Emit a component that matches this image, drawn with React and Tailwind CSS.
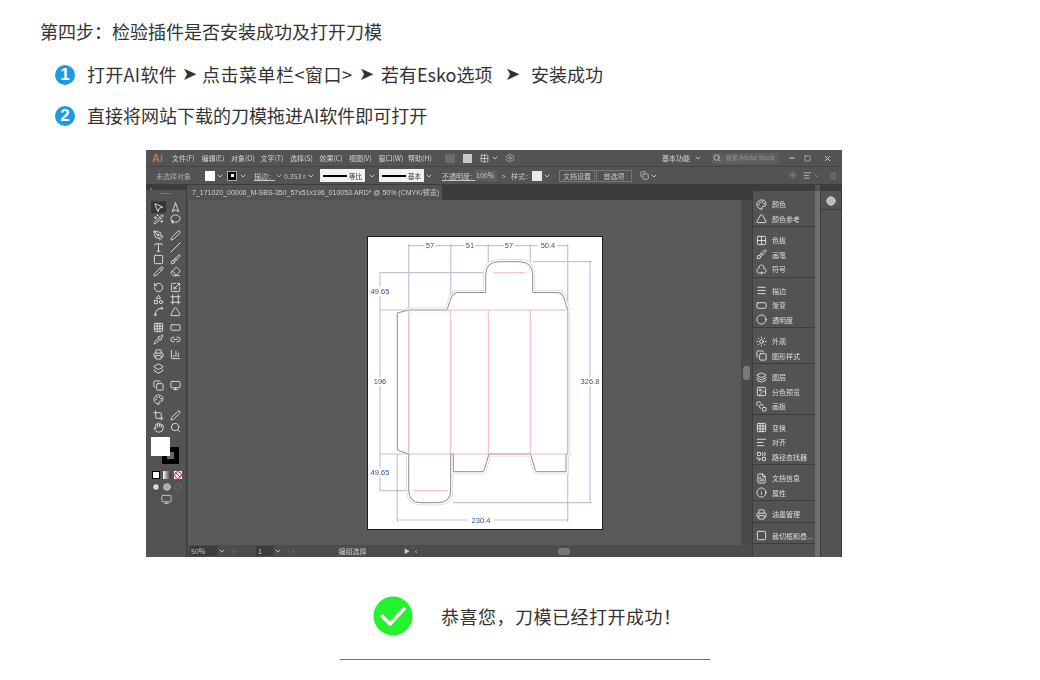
import {
  MousePointer2, Navigation2, WandSparkles, Lasso, PenTool, Pen, Type, Slash, Square, Brush, Pencil, Eraser,
  RotateCcw, Scaling, Shapes, Frame, Spline, Triangle, Grid3x3, RectangleHorizontal, Pipette, Link2,
  Printer, ChartColumn, Layers2, Monitor, Crop, Hand, Search, Palette, Club, Menu, Circle, Sun, Copy,
  Layers, SquareStack, Grid2x2, AlignLeft, Combine, FileText, Info, Image, Ban, ChevronDown, Minus, X,
  Settings,
} from "lucide-react";

const menus = ["文件(F)", "编辑(E)", "对象(O)", "文字(T)", "选择(S)", "效果(C)", "视图(V)", "窗口(W)", "帮助(H)"];

const tools = [
  [MousePointer2, Navigation2, ""],
  [WandSparkles, Lasso, ""],
  [PenTool, Pen, "mt-[4px]"],
  [Type, Slash, ""],
  [Square, Brush, ""],
  [Pencil, Eraser, ""],
  [RotateCcw, Scaling, "mt-[4px]"],
  [Shapes, Frame, ""],
  [Spline, Triangle, ""],
  [Grid3x3, RectangleHorizontal, "mt-[4px]"],
  [Pipette, Link2, ""],
  [Printer, ChartColumn, "mt-[3px]"],
  [Layers2, null, "mt-[2px]"],
  [Copy, Monitor, "mt-[5px]"],
  [Palette, null, "mt-[2px]"],
  [Crop, Pen, "mt-[4px]"],
  [Hand, Search, ""],
];

const panelGroups = [
  [[Palette, "颜色"], [Triangle, "颜色参考"]],
  [[Grid2x2, "色板"], [Brush, "画笔"], [Club, "符号"]],
  [[Menu, "描边"], [RectangleHorizontal, "渐变"], [Circle, "透明度"]],
  [[Sun, "外观"], [Copy, "图形样式"]],
  [[Layers, "图层"], [Image, "分色预览"], [SquareStack, "画板"]],
  [[Grid3x3, "变换"], [AlignLeft, "对齐"], [Combine, "路径查找器"]],
  [[FileText, "文档信息"], [Info, "属性"]],
  [[Printer, "油墨管理"]],
  [[Square, "裁切框和叠..."]],
];

const Chevron = ({ className = "" }) => <ChevronDown size={8} strokeWidth={2.5} className={`text-[#d8d8d8] shrink-0 ${className}`} />;

const LineBox = ({ label, className }) => (
  <div className={`flex items-center h-[13px] w-[45px] bg-[#f2f2f2] px-[3px] gap-[2px] text-[#333] text-[6.5px] ${className}`}>
    <div className="h-[2px] w-[26px] bg-black"></div>
    <span>{label}</span>
  </div>
);

const ToolSlot = ({ Icon, active }) => (
  <div className={`relative w-[15px] h-[12px] flex items-center justify-center ${active ? "bg-[#383838]" : ""}`}>
    {Icon && <Icon size={11} strokeWidth={2} className="text-[#e2e2e2]" />}
  </div>
);

const MenuBar = () => (
  <div className="h-[17px] flex items-center border-b border-[#444] text-[7px] text-[#d4d4d4]">
    <span className="ml-[6px] w-[20px] text-[11px] font-bold text-[#b9774b] font-['Liberation_Sans',sans-serif]">Ai</span>
    <div className="flex gap-[8.5px]">
      {menus.map((m) => (
        <span key={m} className="w-[21px] whitespace-nowrap">{m}</span>
      ))}
    </div>
    <div className="ml-[16px] w-[10px] h-[9px] bg-[#6b6b6b]"></div>
    <div className="ml-[8px] w-[9px] h-[9px] bg-[#c8c8c8]"></div>
    <Grid2x2 size={9} className="ml-[8px] text-[#ddd]" />
    <Chevron className="ml-[2px]" />
    <Settings size={10} className="ml-[6px] text-[#aaa]" />
    <span className="ml-[147px] whitespace-nowrap">基本功能</span>
    <Chevron className="ml-[4px]" />
    <div className="ml-[10px] h-[11px] w-[67px] bg-[#5e5e5e] flex items-center gap-[2px] px-[1px] text-[6px] text-[#999]">
      <Search size={8} className="text-[#ddd]" />
      <span className="whitespace-nowrap ml-[3px]">搜索 Adobe Stock</span>
    </div>
    <Minus size={8} strokeWidth={3} className="ml-[9px]" />
    <Square size={7} strokeWidth={2} className="ml-[8px]" />
    <X size={9} strokeWidth={2.5} className="ml-[12px]" />
  </div>
);

const ControlBar = () => (
  <div className="h-[18px] flex items-center border-b border-[#3c3c3c] text-[7px] text-[#c8c8c8] whitespace-nowrap">
    <span className="ml-[10px] w-[31px] text-[#aaa]">未选择对象</span>
    <div className="ml-[18px] w-[10px] h-[10px] bg-white"></div>
    <Chevron className="ml-[1px]" />
    <div className="ml-[3px] w-[10px] h-[10px] bg-black border border-[#aaa] flex items-center justify-center">
      <div className="w-[3px] h-[3px] bg-white"></div>
    </div>
    <Chevron className="ml-[2px]" />
    <span className="ml-[7px] w-[17px] underline">{"描边\uFF1A"}</span>
    <ChevronDown size={8} className="ml-[4px]" />
    <span className="ml-[1px] w-[20px]">0.353 r</span>
    <Chevron className="ml-[3px]" />
    <LineBox label="等比" className="ml-[5px]" />
    <Chevron className="ml-[3px]" />
    <LineBox label="基本" className="ml-[3px]" />
    <Chevron className="ml-[1px]" />
    <span className="ml-[9px] w-[30px] underline">{"不透明度\uFF1A"}</span>
    <span className="ml-[3px] w-[22px] h-[11px] bg-[#5e5e5e] leading-[11px] px-[1px]">100%</span>
    <span className="ml-[5px] w-[6px]">&gt;</span>
    <span className="ml-[3px] w-[20px]">{"样式\uFF1A"}</span>
    <div className="ml-[1px] w-[10px] h-[10px] bg-[#e8e8e8]"></div>
    <Chevron className="ml-[1px]" />
    <span className="ml-[8px] w-[36px] h-[12px] border border-[#777] text-center leading-[10px]">文档设置</span>
    <span className="ml-[1px] w-[36px] h-[12px] border border-[#777] text-center leading-[10px]">首选项</span>
    <Copy size={9} className="ml-[8px]" />
    <Chevron className="ml-[1px]" />
    <Grid2x2 size={7} className="ml-[131px] text-[#888]" />
    <AlignLeft size={9} className="ml-[7px]" />
    <Chevron className="ml-[1px] opacity-40" />
    <Menu size={8} className="ml-[8px] text-[#999]" />
  </div>
);

const ToolPanel = () => (
  <div className="w-[41px] shrink-0 border-r border-[#3c3c3c] flex flex-col relative">
    <div className="h-[5px] bg-[#3c3c3c] text-[#bbb] text-[5px] leading-[5px] pl-[4px]">«</div>
    <div className="h-[1px] w-[10px] mt-[3px] mx-auto bg-[#777]"></div>
    <div className="mt-[7px] pl-[5px] flex flex-col">
      {tools.map(([L, R, cls], i) => (
        <div key={i} className={`flex gap-[2px] ${cls}`}>
          <ToolSlot Icon={L} active={i === 0} />
          <ToolSlot Icon={R} />
        </div>
      ))}
    </div>
    {/* fill and stroke overlap each other */}
    <div className="relative ml-[5px] mt-[4px] w-[28px] h-[28px]">
      <div className="absolute left-[11px] top-[10px] w-[17px] h-[17px] bg-black flex items-center justify-center">
        <div className="w-[7px] h-[7px] bg-[#666]"></div>
      </div>
      <div className="absolute left-0 top-0 w-[19px] h-[19px] bg-white"></div>
    </div>
    <div className="ml-[6px] mt-[6px] flex gap-[3px]">
      <div className="w-[8px] h-[8px] bg-white border border-black"></div>
      <div className="w-[8px] h-[8px] bg-gradient-to-r from-white to-[#333]"></div>
      <div className="w-[8px] h-[8px] bg-white flex items-center justify-center">
        <Ban size={8} strokeWidth={3} className="text-[#e0201c]" />
      </div>
    </div>
    <div className="ml-[6px] mt-[4px] flex gap-[3px]">
      <Circle size={8} fill="#ddd" className="text-[#222]" />
      <Circle size={8} fill="#aaa" className="text-[#ddd]" />
      <Circle size={8} className="text-[#777]" />
    </div>
    <Monitor size={11} className="ml-[15px] mt-[3px] text-[#ccc]" />
  </div>
);

const Dieline = () => {
  const body =
    "M408.7 310 H447 L451 298 Q453 292.5 457 292.5 H485.7 V275 Q485.7 261.7 499 261.7 H519 Q532.7 261.7 532.7 275 V292.5 H558 Q562 292.5 564 298 L567.7 310 V454 L566 454 V471.7 H537 Q535.7 471.7 535 469 L530.5 454 H489 L484.5 469 Q484 471.7 482 471.7 H453.3 V454 H450.7 V490 Q450.7 502.7 438 502.7 H421 Q408.7 502.7 408.7 490 Z";
  const dim = "#bcc5da";
  const label = "#2f5597";
  const labels = [
    [430, 248, "57"], [470, 248, "51"], [509, 248, "57"], [548, 248, "50.4"],
    [380, 294, "49.65"], [380, 384, "196"], [380, 475, "49.65"], [590, 384, "326.8"], [481, 522.5, "230.4"],
  ];
  return (
    <svg viewBox="368 237 234 292" className="w-[234px] h-[292px] block">
      <rect x="368" y="237" width="234" height="292" fill="#fff" />
      <g stroke={dim} strokeWidth="1.2" fill="none">
        <path d="M408.7 245.7 H567.7 M408.7 243.7 V310 M450.7 243.7 V310 M488.3 243.7 V262 M530.3 243.7 V262 M567.7 243.7 V310" />
        <path d="M380 272.7 H488 M380 310 H408 M380 454 H408 M380 490.7 H408 M380 272.7 V490.7" />
        <path d="M533 261.7 H592 M590 261.7 V502.7 M453 502.7 H592" />
        <path d="M397.3 520 H567.7 M397.3 454 V522 M567.7 454 V522" />
      </g>
      <path d={body} fill="#fff" stroke="#d3dfc4" strokeWidth="5" />
      <path d={body} fill="#fff" stroke="#fff" strokeWidth="3.5" />
      <path d={body} fill="#fff" stroke="#8f8f8f" strokeWidth="1" />
      <path d="M408.7 310 L397.3 313 V450 L408.7 454" fill="#fff" stroke="#8f8f8f" strokeWidth="1" />
      <g stroke="#f4b6c2" strokeWidth="1" fill="none">
        <path d="M408.7 310 H567.7 M408.7 454 H567.7 M408.7 310 V454 M450.7 310 V454 M488.3 310 V454 M530.3 310 V454 M567.7 310 V454" />
        <path d="M493 272.7 H525 M413 490.7 H446.7" />
      </g>
      <g fill={label} fontSize="7.5" textAnchor="middle" fontFamily="Liberation Sans, sans-serif">
        {labels.map(([x, y, t]) => (
          <g key={`${x}-${y}`}>
            <rect x={x - t.length * 2.6} y={y - 7} width={t.length * 5.2} height="9" fill="#fff" />
            <text x={x} y={y}>{t}</text>
          </g>
        ))}
      </g>
    </svg>
  );
};

const Center = () => (
  <div className="flex-1 flex flex-col min-w-0">
    <div className="h-[15px] bg-[#3c3c3c] flex text-[7px] text-[#d0d0d0]">
      <div className="w-[255px] bg-[#535353] flex items-center pl-[5px] whitespace-nowrap font-['Liberation_Sans','Noto_Sans_CJK_SC',sans-serif]">
        7_171020_00006_M-SBS-350_57x51x196_010053.ARD* @ 50% (CMYK/预览)
        <X size={7} strokeWidth={3} className="ml-[5px]" />
      </div>
    </div>
    <div className="flex-1 flex min-h-0">
      <div className="flex-1 bg-[#5a5a5a] pl-[180px] pt-[37px] border-l border-[#4a4a4a]">
        <div className="w-[234px] h-[292px] shadow-[0_0_0_1px_#1d1d1d]">
          <Dieline />
        </div>
      </div>
      <div className="w-[11px] bg-[#4a4a4a] flex flex-col items-center pt-[166px]">
        <div className="w-[7px] h-[14px] rounded-[3px] bg-[#7a7a7a]"></div>
      </div>
    </div>
    <div className="h-[12px] bg-[#4c4c4c] flex items-center text-[7px] text-[#ccc] whitespace-nowrap">
      <span className="ml-[3px] w-[27px] h-[10px] bg-[#3c3c3c] leading-[10px] px-[1px]">50%</span>
      <Chevron className="ml-[1px]" />
      <span className="ml-[6px] w-[24px] text-[#777] text-[6px]">|‹ ‹</span>
      <span className="w-[17px] h-[10px] bg-[#3c3c3c] leading-[10px] px-[2px]">1</span>
      <Chevron className="ml-[1px]" />
      <span className="ml-[6px] w-[22px] text-[#777] text-[6px]">› ›|</span>
      <span className="w-[75px] ml-[5px] text-center">编组选择</span>
      <span className="ml-[14px] text-[6px]">▶</span>
      <span className="ml-[5px] text-[8px]">‹</span>
      <div className="ml-[141px] w-[12px] h-[7px] rounded-[3px] bg-[#777]"></div>
    </div>
  </div>
);

const RightDock = () => (
  <div className="w-[90px] shrink-0 flex">
    <div className="w-[63px] flex flex-col overflow-hidden border-l border-[#3c3c3c]">
      <div className="h-[6px] shrink-0 bg-[#3c3c3c]"></div>
      {panelGroups.map((group, i) => (
        <div key={i} className="shrink-0 border-b border-[#3c3c3c] pt-[6px]">
          {group.map(([Icon, name]) => (
            <div key={name} className="h-[14.5px] flex items-center text-[7px] text-[#dedede] whitespace-nowrap">
              <Icon size={11} strokeWidth={2} className="ml-[3px] text-[#e4e4e4]" />
              <span className="ml-[5px]">{name}</span>
            </div>
          ))}
        </div>
      ))}
    </div>
    <div className="w-[5px] bg-[#6e6e6e] mt-[6px]"></div>
    <div className="w-[1px] bg-[#3c3c3c]"></div>
    <div className="w-[20px] flex flex-col">
      <div className="h-[6px] bg-[#3c3c3c]"></div>
      <div className="h-[18px] border-b border-[#3c3c3c] flex items-center justify-center mt-[1px]">
        <Circle size={10} fill="#bbb" className="text-[#ddd]" />
      </div>
    </div>
    <div className="w-[1px] bg-[#3c3c3c]"></div>
  </div>
);

const AiWindow = () => (
  <div className="ml-[146px] mt-[23px] w-[696px] h-[407px] bg-[#535353] flex flex-col overflow-hidden blur-[0.35px] font-['Noto_Sans_CJK_SC',sans-serif]">
    <MenuBar />
    <ControlBar />
    <div className="flex-1 flex min-h-0">
      <ToolPanel />
      <Center />
      <RightDock />
    </div>
  </div>
);

const StepBadge = ({ n }) => (
  <div className="ml-[15px] mt-[2px] w-[20px] h-[20px] rounded-full bg-[#1b9be3] text-white text-[17px] font-bold leading-[20px] text-center font-['Liberation_Sans',sans-serif]">
    {n}
  </div>
);

const Arrow = ({ className }) => (
  <span className={`w-[15px] text-[18px] leading-[24px] font-['DejaVu_Sans',sans-serif] ${className}`}>➤</span>
);

export default function App() {
  return (
    <div className="w-[1040px] h-[680px] bg-white overflow-hidden pt-[19px] text-[18px] leading-[24px] text-[#333] font-['Noto_Sans_CJK_SC',sans-serif]">
      <div className="ml-[40px] h-[24px]">{"第四步\uFF1A检验插件是否安装成功及打开刀模"}</div>

      <div className="ml-[40px] mt-[19px] h-[24px] flex items-center whitespace-nowrap">
        <StepBadge n="1" />
        <span className="ml-[12px] w-[90px] tracking-[0.3px]">打开AI软件</span>
        <Arrow className="ml-[5px]" />
        <span className="ml-[5px] w-[151px] tracking-[0.5px]">点击菜单栏&lt;窗口&gt;</span>
        <Arrow className="ml-[6px]" />
        <span className="ml-[7px] w-[112px]">若有Esko选项</span>
        <Arrow className="ml-[12px]" />
        <span className="ml-[11px]">安装成功</span>
      </div>

      <div className="ml-[40px] mt-[17px] h-[24px] flex items-center whitespace-nowrap">
        <StepBadge n="2" />
        <span className="ml-[12px]">直接将网站下载的刀模拖进AI软件即可打开</span>
      </div>

      <AiWindow />

      <div className="ml-[373px] mt-[39px] h-[40px] flex items-center">
        <svg viewBox="0 0 40 40" className="w-[40px] h-[40px]">
          <circle cx="20" cy="20" r="19.5" fill="#25f22e" />
          <polyline points="9,20 17,28 31,13" fill="none" stroke="#fff" strokeWidth="3.5" strokeLinecap="round" strokeLinejoin="round" />
        </svg>
        <span className="ml-[28px] whitespace-nowrap tracking-[0.5px]">{"恭喜您\uFF0C刀模已经打开成功\uFF01"}</span>
      </div>

      <div className="ml-[340px] mt-[23px] w-[370px] h-[1px] bg-[#0a8ce0]"></div>
    </div>
  );
}
